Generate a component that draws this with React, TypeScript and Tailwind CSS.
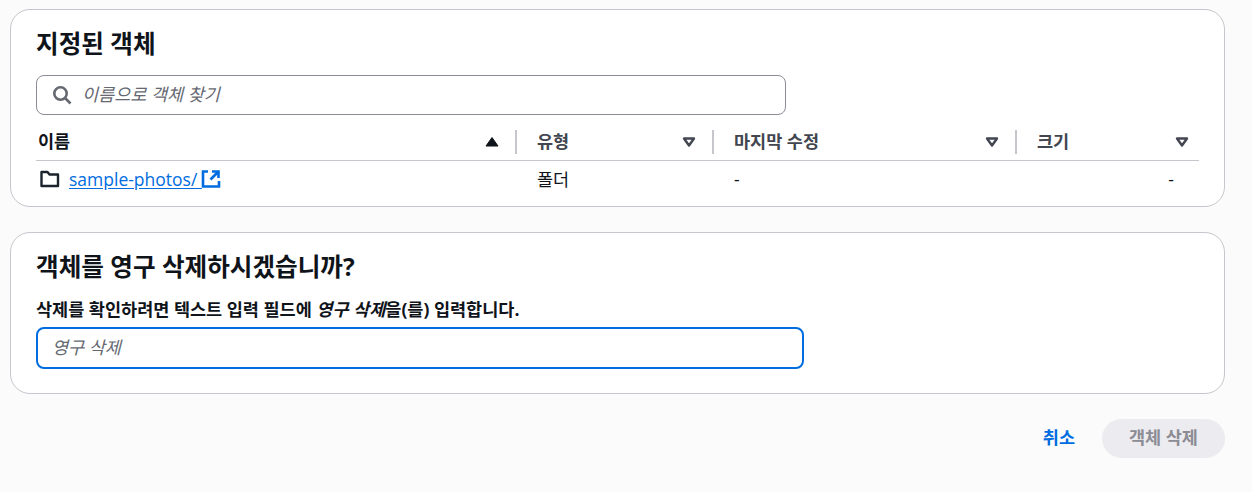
import React from "react";

const font = "font-['Open_Sans','Noto_Sans_CJK_KR',sans-serif]";

const SortIcon = ({ active }: { active?: boolean }) => (
  <svg width="14" height="12" viewBox="0 0 14 12" className="shrink-0">
    {active ? (
      <path d="M7 1.5 L13 10 H1 Z" fill="#0f141a" stroke="#0f141a" strokeWidth="1" strokeLinejoin="round" />
    ) : (
      <path d="M2 2.5 H12 L7 9.5 Z" fill="none" stroke="#424650" strokeWidth="2.4" strokeLinejoin="round" />
    )}
  </svg>
);

const HeaderCell = ({ label, active, last }: { label: string; active?: boolean; last?: boolean }) => (
  <div className="flex h-[24px] items-center justify-between">
    <span className={`pb-[2px] text-[17.5px] font-bold ${active ? "pl-[2px] text-[#0f141a]" : "pl-[20px] text-[#424650]"}`}>{label}</span>
    <div className={`flex items-center ${last ? "pr-[10px]" : "gap-[16px]"}`}>
      <SortIcon active={active} />
      {!last && <span className="h-[24px] w-[2px] bg-[#c6c6cd]" />}
    </div>
  </div>
);

export default function App() {
  return (
    <div className={`${font} h-[492px] w-[1252px] overflow-hidden bg-[#fbfbfb] pl-[10px] pr-[27px] pt-[9px] text-[#0f141a]`}>
      {/* 지정된 객체 */}
      <section className="h-[198px] rounded-[20px] border border-[#c6c6cd] bg-white pl-[25px] pr-[25px] pt-[15px]">
        <h2 className="text-[24.6px] font-bold leading-[38px]">지정된 객체</h2>
        <div className="mt-[12px] flex h-[40px] w-[750px] items-center rounded-[8px] border border-[#8c8c94] bg-white pl-[15px]">
          <svg width="20" height="20" viewBox="0 0 20 20" fill="none" className="shrink-0">
            <circle cx="8.5" cy="8.5" r="6.2" stroke="#656871" strokeWidth="2.6" />
            <path d="M13 13 L18.5 18.5" stroke="#656871" strokeWidth="2.6" />
          </svg>
          <input
            readOnly
            placeholder="이름으로 객체 찾기"
            className="ml-[10px] w-full bg-transparent pb-[2px] text-[17.5px] italic outline-none placeholder:text-[#656871]"
          />
        </div>
        <div className="mt-[15px] grid h-[31px] grid-cols-[481px_197px_303px_182px] border-b border-[#c6c6cd]">
          <HeaderCell label="이름" active />
          <HeaderCell label="유형" />
          <HeaderCell label="마지막 수정" />
          <HeaderCell label="크기" last />
        </div>
        <div className="grid h-[36px] grid-cols-[481px_197px_303px_182px] items-center text-[17.5px] leading-[24px]">
          <div className="flex items-center pl-[4px]">
            <svg width="20" height="20" viewBox="0 0 20 20" fill="none" className="shrink-0">
              <path d="M1.5 3 H7.5 L9.5 5.5 H18 V17 H1.5 Z" stroke="#1b232d" strokeWidth="2.4" strokeLinejoin="round" />
            </svg>
            <a className="ml-[9px] whitespace-pre text-[#006ce0] underline underline-offset-2">sample-photos/ </a>
            <svg width="20" height="20" viewBox="0 0 20 20" fill="none" className="ml-[-1px] shrink-0">
              <path d="M7 2.5 H2 V17.5 H18 V12" stroke="#006ce0" strokeWidth="2.6" />
              <path d="M11 2.5 H17.5 V9" stroke="#006ce0" strokeWidth="2.6" />
              <path d="M17.5 2.5 L9.5 10.5" stroke="#006ce0" strokeWidth="2.6" />
            </svg>
          </div>
          <div className="pl-[20px]">폴더</div>
          <div className="pl-[20px]">-</div>
          <div className="pr-[25px] text-right">-</div>
        </div>
      </section>

      {/* 영구 삭제 확인 */}
      <section className="mt-[25px] h-[162px] rounded-[20px] border border-[#c6c6cd] bg-white pl-[25px] pr-[25px] pt-[15px]">
        <h2 className="text-[24.6px] font-bold leading-[38px]">객체를 영구 삭제하시겠습니까?</h2>
        <p className="mt-[13px] text-[17.5px] font-bold leading-[20px]">
          삭제를 확인하려면 텍스트 입력 필드에 <em>영구 삭제</em>을(를) 입력합니다.
        </p>
        <input
          readOnly
          placeholder="영구 삭제"
          className="mt-[8px] block h-[42px] w-[768px] rounded-[8px] border-2 border-[#006ce0] bg-white pb-[2px] pl-[14px] text-[17.5px] italic outline-none placeholder:text-[#656871]"
        />
      </section>

      {/* 액션 */}
      <div className="mt-[25px] flex items-center justify-end">
        <button className="mr-[27px] pb-[2px] text-[17.5px] font-bold text-[#006ce0]">취소</button>
        <button disabled className="h-[39px] w-[123px] rounded-full bg-[#ebebf0] pb-[2px] text-[17.5px] font-bold text-[#8c8c94]">
          객체 삭제
        </button>
      </div>
    </div>
  );
}
